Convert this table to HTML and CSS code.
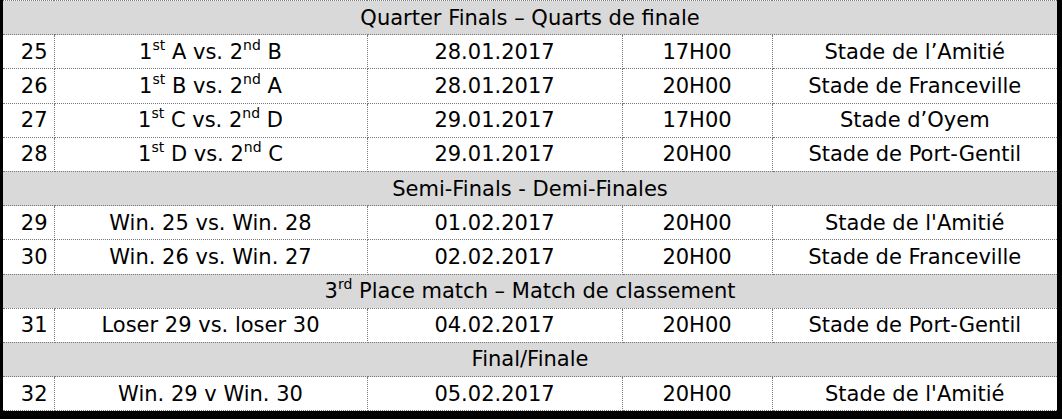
FILE: index.html
```html
<!DOCTYPE html>
<html lang="en">
<head>
<meta charset="utf-8">
<title>Fixtures</title>
<link rel="stylesheet" href="styles.css">
</head>
<body>
<div class="frame">
<table class="fixtures">
  <colgroup>
    <col class="c-num"><col class="c-match"><col class="c-date"><col class="c-time"><col class="c-venue">
  </colgroup>
  <tbody>
    <tr class="stage"><td colspan="5">Quarter Finals – Quarts de finale</td></tr>
    <tr><td class="num">25</td><td>1<sup>st</sup> A vs. 2<sup>nd</sup> B</td><td>28.01.2017</td><td>17H00</td><td>Stade de l’Amitié</td></tr>
    <tr><td class="num">26</td><td>1<sup>st</sup> B vs. 2<sup>nd</sup> A</td><td>28.01.2017</td><td>20H00</td><td>Stade de Franceville</td></tr>
    <tr><td class="num">27</td><td>1<sup>st</sup> C vs. 2<sup>nd</sup> D</td><td>29.01.2017</td><td>17H00</td><td>Stade d’Oyem</td></tr>
    <tr><td class="num">28</td><td>1<sup>st</sup> D vs. 2<sup>nd</sup> C</td><td>29.01.2017</td><td>20H00</td><td>Stade de Port-Gentil</td></tr>
    <tr class="stage"><td colspan="5">Semi-Finals - Demi-Finales</td></tr>
    <tr><td class="num">29</td><td>Win. 25 vs. Win. 28</td><td>01.02.2017</td><td>20H00</td><td>Stade de l'Amitié</td></tr>
    <tr><td class="num">30</td><td>Win. 26 vs. Win. 27</td><td>02.02.2017</td><td>20H00</td><td>Stade de Franceville</td></tr>
    <tr class="stage"><td colspan="5">3<sup>rd</sup> Place match – Match de classement</td></tr>
    <tr><td class="num">31</td><td>Loser 29 vs. loser 30</td><td>04.02.2017</td><td>20H00</td><td>Stade de Port-Gentil</td></tr>
    <tr class="stage"><td colspan="5">Final/Finale</td></tr>
    <tr><td class="num">32</td><td>Win. 29 v Win. 30</td><td>05.02.2017</td><td>20H00</td><td>Stade de l'Amitié</td></tr>
  </tbody>
</table>
</div>
</body>
</html>
```
FILE: styles.css
```css
html, body {
  margin: 0;
  padding: 0;
  background: #000;
}
.frame {
  width: 1054px;
  margin-left: 3px;
  background: #fff;
}
.fixtures {
  width: 1054px;
  border-collapse: collapse;
  table-layout: fixed;
  font-family: "DejaVu Sans", sans-serif;
  font-size: 21px;
  color: #000;
}
.c-num { width: 51px; }
.c-match { width: 313px; }
.c-date { width: 255px; }
.c-time { width: 150px; }
.c-venue { width: 285px; }
.fixtures td {
  height: 33.2px;
  padding: 0 4px;
  text-align: center;
  vertical-align: middle;
  border: 1px dotted #7a7a7a;
  line-height: 24px;
  white-space: nowrap;
}
.fixtures td.num {
  text-align: right;
  padding-right: 6px;
}
.fixtures td:first-child { border-left: none; }
.fixtures td:last-child { border-right: none; }
.stage td {
  background: #d9d9d9;
}
sup {
  font-size: 14px;
  line-height: 0;
  vertical-align: 9px;
}
```
